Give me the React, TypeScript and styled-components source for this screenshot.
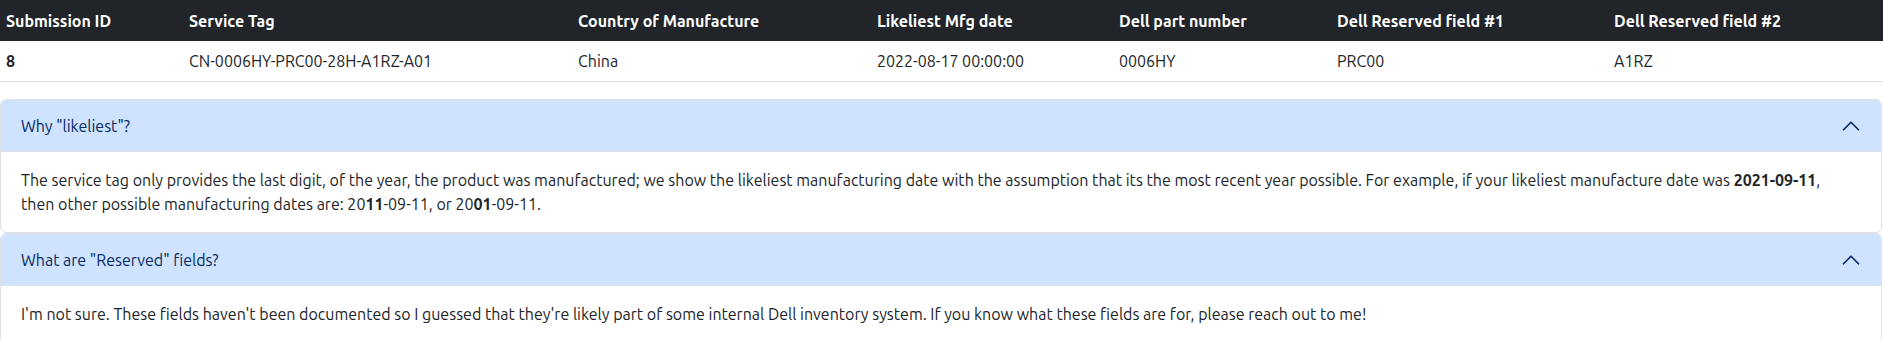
import React from "react";
import styled, { createGlobalStyle } from "styled-components";

const GlobalStyle = createGlobalStyle`
  body {
    margin: 0;
    background: #fff;
    font-family: Ubuntu, "Open Sans", "Noto Sans", sans-serif;
    font-size: 16px;
    line-height: 24px;
    color: #212529;
  }
`;

const columns = [
  { title: "Submission ID", width: 183 },
  { title: "Service Tag", width: 389 },
  { title: "Country of Manufacture", width: 299 },
  { title: "Likeliest Mfg date", width: 242 },
  { title: "Dell part number", width: 218 },
  { title: "Dell Reserved field #1", width: 277 },
  { title: "Dell Reserved field #2", width: 275 },
];

const row = [
  "8",
  "CN-0006HY-PRC00-28H-A1RZ-A01",
  "China",
  "2022-08-17 00:00:00",
  "0006HY",
  "PRC00",
  "A1RZ",
];

const Chevron = () => (
  <ChevronIcon viewBox="0 0 16 16" fill="none">
    <path
      d="M2 11L8 5L14 11"
      stroke="#052c65"
      strokeWidth="1.4"
      strokeLinecap="round"
      strokeLinejoin="round"
    />
  </ChevronIcon>
);

const FaqItem = ({
  question,
  children,
}: {
  question: string;
  children: React.ReactNode;
}) => (
  <Accordion>
    <AccordionButton>
      <span>{question}</span>
      <Chevron />
    </AccordionButton>
    <AccordionBody>{children}</AccordionBody>
  </Accordion>
);

const App = () => {
  return (
    <Page>
      <GlobalStyle />
      <Table>
        <colgroup>
          {columns.map((c) => (
            <col key={c.title} style={{ width: c.width }} />
          ))}
        </colgroup>
        <thead>
          <tr>
            {columns.map((c) => (
              <HeadCell key={c.title}>{c.title}</HeadCell>
            ))}
          </tr>
        </thead>
        <tbody>
          <tr>
            {row.map((value, i) => (
              <Cell key={i} $bold={i === 0}>
                {value}
              </Cell>
            ))}
          </tr>
        </tbody>
      </Table>

      <FaqItem question={'Why "likeliest"?'}>
        The service tag only provides the last digit, of the year, the product
        was manufactured; we show the likeliest manufacturing date with the
        assumption that its the most recent year possible. For example, if your
        likeliest manufacture date was <b>2021-09-11</b>, then other possible
        manufacturing dates are: 20<b>11</b>-09-11, or 20<b>01</b>-09-11.
      </FaqItem>

      <FaqItem question={'What are "Reserved" fields?'}>
        I'm not sure. These fields haven't been documented so I guessed that
        they're likely part of some internal Dell inventory system. If you know
        what these fields are for, please reach out to me!
      </FaqItem>
    </Page>
  );
};

const Page = styled.div`
  width: 100%;
`;

const Table = styled.table`
  width: 100%;
  table-layout: fixed;
  border-collapse: collapse;
  margin-bottom: 17px;
`;

const HeadCell = styled.th`
  background: #212529;
  color: #fff;
  font-weight: 700;
  text-align: left;
  padding: 8px 6px;
  height: 41px;
  box-sizing: border-box;
  white-space: nowrap;
`;

const Cell = styled.td<{ $bold?: boolean }>`
  padding: 8px 6px;
  font-weight: ${(p) => (p.$bold ? 700 : 400)};
  border-bottom: 1px solid #dee2e6;
  white-space: nowrap;
`;

const Accordion = styled.div`
  margin-right: 1px;
  border: 1px solid #dee2e6;
  border-radius: 6px;
  overflow: hidden;
  background: #fff;
`;

const AccordionButton = styled.div`
  display: flex;
  align-items: center;
  justify-content: space-between;
  padding: 16px 20px;
  line-height: 20px;
  background: #cfe2ff;
  color: #052c65;
  box-shadow: inset 0 -1px 0 #dee2e6;
`;

const ChevronIcon = styled.svg`
  width: 20px;
  height: 20px;
  flex-shrink: 0;
`;

const AccordionBody = styled.div`
  padding: 16px 40px 16px 20px;
`;

export default App;
